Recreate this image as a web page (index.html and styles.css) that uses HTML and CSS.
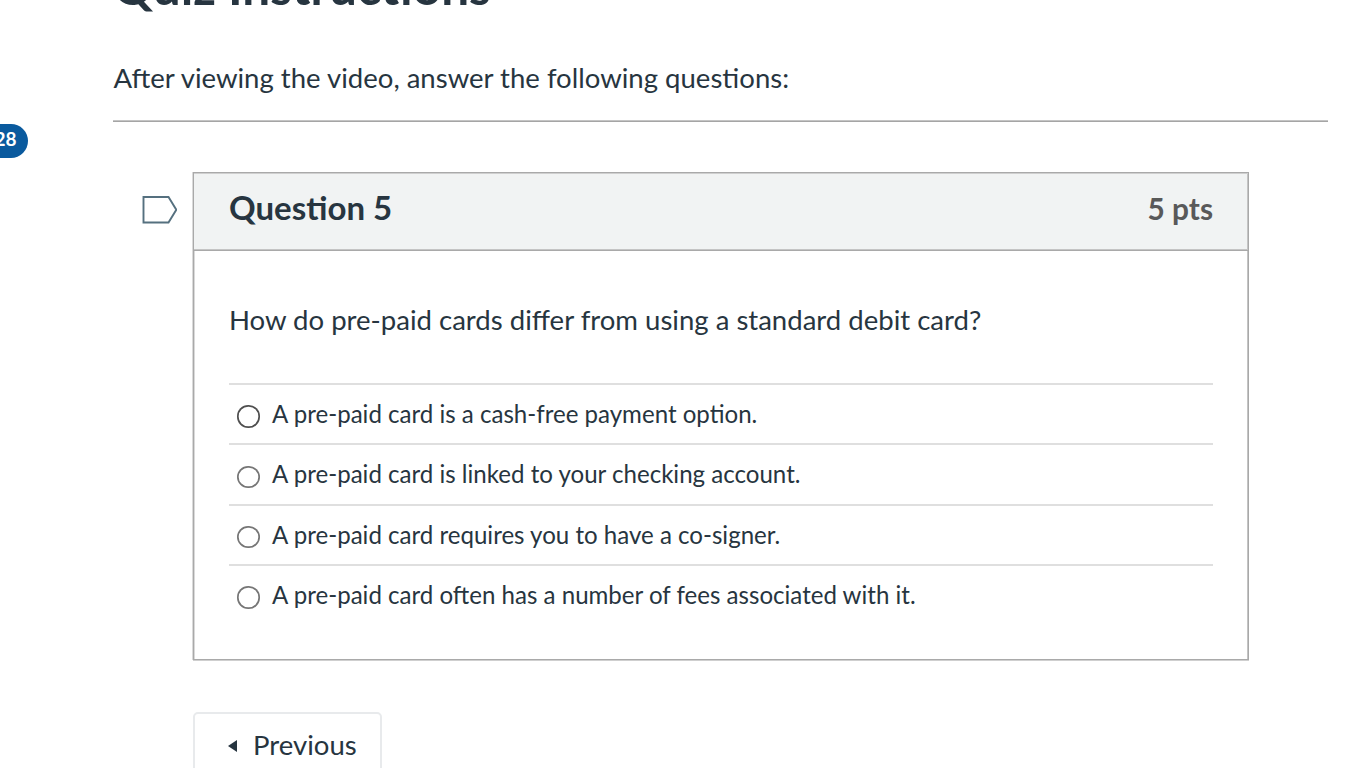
FILE: index.html
```
<!DOCTYPE html>
<html lang="en">
<head>
    <meta charset="UTF-8">
    <meta name="viewport" content="width=device-width, initial-scale=1.0">
    <title>Quiz</title>
    <link rel="stylesheet" href="styles.css">
</head>
<body>
    <span class="badge">28</span>

    <main class="quiz">
        <h1 class="quiz-title">Quiz Instructions</h1>
        <p class="description">After viewing the video, answer the following questions:</p>

        <div class="question-row">
            <svg class="flag" width="36" height="30" viewBox="0 0 36 30">
                <path d="M2.5 2H27.5L35.3 14.8L27.5 27.5H2.5Z" fill="#fff" stroke="#55707f" stroke-width="1.9"/>
            </svg>
            <section class="question">
                <header class="question-header">
                    <h2 class="question-name">Question 5</h2>
                    <span class="points">5 pts</span>
                </header>
                <div class="question-body">
                    <p class="question-text">How do pre-paid cards differ from using a standard debit card?</p>
                    <div class="answers">
                        <label class="answer">
                            <input class="radio radio-hover" type="radio" name="answer">
                            <span class="answer-label">A pre-paid card is a cash-free payment option.</span>
                        </label>
                        <label class="answer">
                            <input class="radio" type="radio" name="answer">
                            <span class="answer-label">A pre-paid card is linked to your checking account.</span>
                        </label>
                        <label class="answer">
                            <input class="radio" type="radio" name="answer">
                            <span class="answer-label">A pre-paid card requires you to have a co-signer.</span>
                        </label>
                        <label class="answer">
                            <input class="radio" type="radio" name="answer">
                            <span class="answer-label">A pre-paid card often has a number of fees associated with it.</span>
                        </label>
                    </div>
                </div>
            </section>
        </div>

        <button class="previous" type="button">
            <svg class="arrow" width="9" height="12" viewBox="0 0 9 12">
                <path d="M9 0V12L0 6Z" fill="#273540"/>
            </svg>
            <span class="previous-text">Previous</span>
        </button>
    </main>
</body>
</html>
```

FILE: styles.css
```
*{
    box-sizing: border-box;
}
body{
    margin: 0;
    height: 100vh;
    overflow: hidden;
    background-color: white;
    color: #273540;
    font-family: Lato, sans-serif;
    font-size: 27.54px;
}
/* unread count on the side menu */
.badge{
    position: absolute;
    left: -20px;
    top: 123.5px;
    width: 47.5px;
    height: 34.5px;
    padding-right: 11px;
    border-radius: 18px;
    background-color: #0a5a9e;
    color: white;
    font-size: 19px;
    font-weight: bold;
    line-height: 30px;
    text-align: right;
}
.quiz{
    display: flow-root;
    width: 1215px;
    margin-left: 113px;
}
.quiz-title{
    margin: -44px 0 0;
    font-size: 49.55px;
    line-height: 60px;
}
.description{
    height: 106px;
    margin: 0;
    padding: 42px 0 0 0.5px;
    border-bottom: 1px solid #a5a5a5;
    box-shadow: inset 0 -1px #c4c4c4;
    line-height: 40px;
}
.question-row{
    display: flex;
    align-items: flex-start;
    margin: 50px 0 0 28px;
}
.flag{
    margin: 23px 16px 0 0;
}
/*question card*/
.question{
    width: 1056px;
    height: 488px;
    border: 1px solid #a9a9a9;
    box-shadow: -1px 0 #dadada, 0 1px #cfcfcf, inset -1px 0 #c4c4c4, inset 1px 0 #dadada;
}
.question-header{
    display: flex;
    justify-content: space-between;
    align-items: center;
    height: 78px;
    padding: 0 35px;
    border-bottom: 1px solid #a9a9a9;
    background-color: #f1f3f3;
    box-shadow: inset 0 1px #cfcfcf, inset 0 -1px #c4c4c4, inset -1px 0 #c4c4c4;
}
.question-name{
    margin: 0 0 9px;
    font-size: 33px;
}
.points{
    margin-bottom: 6px;
    color: #595959;
    font-size: 29.8px;
    font-weight: bold;
}
.question-body{
    padding: 49px 35px 0;
}
.question-text{
    margin: 0;
    line-height: 40px;
}
.answers{
    margin-top: 43px;
}
.answer{
    display: flex;
    align-items: center;
    height: 60.25px;
    padding-left: 8px;
    border-top: 2px solid #dfdfdf;
}
.radio{
    appearance: none;
    width: 22.4px;
    height: 22.4px;
    margin: 5px 12.4px 0 0.3px;
    border-radius: 50%;
    background-color: white;
    box-shadow: inset 0 0 0 1.7px #767676;
}
.radio-hover{
    box-shadow: inset 0 0 0 1.7px #4f4f4f;
}
.answer-label{
    margin-bottom: 1px;
    font-size: 24.08px;
}
.previous{
    display: flex;
    align-items: center;
    gap: 16px;
    width: 189px;
    height: 68px;
    margin: 52px 0 0 80px;
    padding: 0 0 0 33px;
    border: 2px solid #e8eaec;
    border-radius: 5px;
    background-color: white;
    color: #273540;
    font-family: Lato, sans-serif;
    font-size: 27.54px;
}
.previous-text{
    margin-bottom: 4px;
}
```
